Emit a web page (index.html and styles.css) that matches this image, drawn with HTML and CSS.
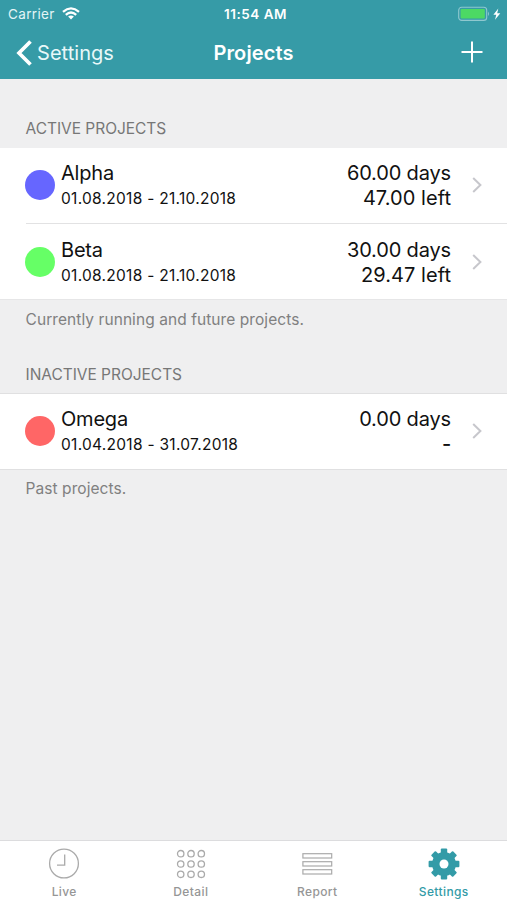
FILE: index.html
```html
<!DOCTYPE html>
<html lang="en">
<head>
<meta charset="utf-8">
<title>Projects</title>
<link rel="stylesheet" href="styles.css">
</head>
<body>
<header class="header">
  <div class="status">
    <div class="status-left">
      <span class="carrier">Carrier</span>
      <svg class="wifi" width="18" height="13" viewBox="0 0 18 13" fill="none" stroke="#fff" stroke-width="2.3"><path d="M1 4.8Q9-2 17 4.8M3.8 7.8Q9 3.3 14.2 7.8"/><path d="M6.1 9.6Q9 7.3 11.9 9.6L9 12.6Z" fill="#fff" stroke="none"/></svg>
    </div>
    <span class="time">11:54 AM</span>
    <svg class="battery" width="44" height="16" viewBox="0 0 44 16"><rect x=".7" y="1.2" width="28" height="13.2" rx="3" fill="none" stroke="#8fc8cf" stroke-width="1.1"/><rect x="2.6" y="3.1" width="24.2" height="9.5" rx="1" fill="#4cd964"/><path d="M30 5.5Q32 7.8 30 10.1Z" fill="#8fc8cf"/><path d="M40.3 2.6 35.4 8.7H38.3L37 13.7 42.3 7.2H39.2Z" fill="#fff"/></svg>
  </div>
  <nav class="nav">
    <a class="back"><svg width="16" height="26" viewBox="0 0 16 26" fill="none" stroke="#fff" stroke-width="3.7"><path d="M14.5 1.5 3 13 14.5 24.5"/></svg><span>Settings</span></a>
    <h1 class="title">Projects</h1>
    <svg class="add" width="22" height="22" viewBox="0 0 22 22" stroke="#fff" stroke-width="2"><path d="M.5 11H21.5M11 .5V21.5"/></svg>
  </nav>
</header>
<main class="content">
  <h2 class="caption first">ACTIVE PROJECTS</h2>
  <section class="group active">
    <article class="row">
      <i class="dot blue"></i>
      <div class="info"><span class="name">Alpha</span><span class="date">01.08.2018 - 21.10.2018</span></div>
      <div class="amount"><span>60.00 days</span><span class="left">47.00 left</span></div>
      <svg class="chevron" width="10" height="16" viewBox="0 0 10 16"><path d="M1.2 1 8.4 8 1.2 15"/></svg>
    </article>
    <article class="row">
      <i class="dot green"></i>
      <div class="info"><span class="name">Beta</span><span class="date">01.08.2018 - 21.10.2018</span></div>
      <div class="amount"><span>30.00 days</span><span class="left">29.47 left</span></div>
      <svg class="chevron" width="10" height="16" viewBox="0 0 10 16"><path d="M1.2 1 8.4 8 1.2 15"/></svg>
    </article>
  </section>
  <p class="note">Currently running and future projects.</p>
  <h2 class="caption">INACTIVE PROJECTS</h2>
  <section class="group inactive">
    <article class="row">
      <i class="dot red"></i>
      <div class="info"><span class="name">Omega</span><span class="date">01.04.2018 - 31.07.2018</span></div>
      <div class="amount"><span>0.00 days</span><span class="dash">-</span></div>
      <svg class="chevron" width="10" height="16" viewBox="0 0 10 16"><path d="M1.2 1 8.4 8 1.2 15"/></svg>
    </article>
  </section>
  <p class="note last">Past projects.</p>
</main>
<footer class="tabs">
  <a class="tab"><svg width="32" height="32" viewBox="0 0 32 32" fill="none" stroke="#aaa" stroke-width="1.3"><circle cx="16" cy="15.5" r="14.4"/><path d="M16.7 6.5V17.2H9"/></svg><span>Live</span></a>
  <a class="tab"><svg width="32" height="32" viewBox="0 0 32 32" fill="none" stroke="#aaa" stroke-width="1.3"><circle cx="5.7" cy="5.7" r="3.2"/><circle cx="16" cy="5.7" r="3.2"/><circle cx="26.3" cy="5.7" r="3.2"/><circle cx="5.7" cy="16" r="3.2"/><circle cx="16" cy="16" r="3.2"/><circle cx="26.3" cy="16" r="3.2"/><circle cx="5.7" cy="26.3" r="3.2"/><circle cx="16" cy="26.3" r="3.2"/><circle cx="26.3" cy="26.3" r="3.2"/></svg><span>Detail</span></a>
  <a class="tab"><svg width="32" height="32" viewBox="0 0 32 32" fill="none" stroke="#aaa" stroke-width="1.2"><rect x="1.9" y="5.7" width="28.8" height="4.3"/><rect x="1.9" y="13.7" width="28.8" height="4.3"/><rect x="1.9" y="21.7" width="28.8" height="4.3"/></svg><span>Report</span></a>
  <a class="tab selected"><svg width="32" height="32" viewBox="0 0 32 32"><g fill="#339ba7"><rect x="12.8" y=".6" width="6.4" height="30.8" rx="1"/><rect x="12.8" y=".6" width="6.4" height="30.8" rx="1" transform="rotate(45 16 16)"/><rect x="12.8" y=".6" width="6.4" height="30.8" rx="1" transform="rotate(90 16 16)"/><rect x="12.8" y=".6" width="6.4" height="30.8" rx="1" transform="rotate(135 16 16)"/><circle cx="16" cy="16" r="12"/></g><circle cx="16" cy="16" r="4.5" fill="#fff"/></svg><span>Settings</span></a>
</footer>
</body>
</html>
```
FILE: styles.css
```css
* { box-sizing: border-box; }
body { margin: 0; width: 507px; height: 900px; display: flex; flex-direction: column; overflow: hidden; background: #efeff0; color: #111; font-family: Inter, "Liberation Sans", sans-serif; }
h1, h2, p { margin: 0; font-weight: 400; }
svg { display: block; flex: none; }
.header { height: 79px; background: #369ba7; color: #fff; flex: none; }
.status { height: 27px; padding: 0 5px 0 8px; display: grid; grid-template-columns: 1fr auto 1fr; align-items: center; }
.status-left { display: flex; align-items: center; gap: 7px; }
.carrier { font-size: 13.5px; letter-spacing: .35px; color: #e4f5f6; }
.time { padding-left: 1px; font-size: 13.5px; font-weight: 600; letter-spacing: .8px; letter-spacing: .5px; }
.battery { justify-self: end; }
.nav { height: 50px; padding: 0 24px 0 16px; display: grid; grid-template-columns: 1fr auto 1fr; align-items: center; }
.back { display: flex; align-items: center; gap: 5px; padding-top: 1px; font-size: 20px; letter-spacing: .05px; color: #e8f8f9; }
.title { padding: 1px 0 0 8px; font-size: 20px; font-weight: 600; letter-spacing: .1px; }
.add { justify-self: end; }
.content { flex: 1; }
.caption { height: 47px; padding: 18px 25.5px 0; font-size: 15.5px; line-height: 22px; letter-spacing: -.03px; color: #777; }
.first { height: 69px; padding-top: 39px; }
.group { background: #fff; }
.active { border-bottom: 1px solid #e6e6e7; }
.inactive { border-top: 1px solid #e0e0e1; border-bottom: 1px solid #e0e0e1; }
.row { height: 75px; padding: 0 25px 1px; display: flex; align-items: center; position: relative; }
.row + .row { height: 76px; padding: 1px 25px 0; }
.row + .row::before { content: ""; position: absolute; left: 26px; right: 0; top: 0; height: 1px; background: #e2e2e3; }
.row + .row .info, .row + .row .amount { padding-top: 2px; }
.dot { width: 30px; height: 30px; border-radius: 50%; flex: none; }
.blue { background: #6666ff; }
.green { background: #66ff66; }
.red { background: #ff6666; }
.info { flex: 1; padding: 1px 0 0 6px; display: flex; flex-direction: column; }
.name { font-size: 20px; line-height: 25px; letter-spacing: -.2px; }
.date { font-size: 15.5px; line-height: 25px; letter-spacing: .28px; }
.amount { padding-top: 1px; display: flex; flex-direction: column; align-items: flex-end; font-size: 20px; line-height: 25px; letter-spacing: -.15px; }
.left { letter-spacing: .05px; }
.dash { font-weight: 500; }
.chevron { margin-left: 21px; fill: none; stroke: #c7c7cc; stroke-width: 2; }
.note { height: 46px; padding: 9px 25.5px 0; font-size: 15.5px; line-height: 22px; letter-spacing: .07px; color: #808080; }
.last { padding-top: 8px; }
.tabs { height: 60px; padding-left: 1px; border-top: 1px solid #dcdcde; background: #fff; display: grid; grid-template-columns: repeat(4, 1fr); flex: none; }
.tab { display: flex; flex-direction: column; align-items: center; padding-top: 7px; font-size: 12px; font-weight: 500; line-height: 16px; letter-spacing: .4px; color: #969696; }
.tab span { margin-top: 4px; }
.selected { color: #339ba7; }
```
